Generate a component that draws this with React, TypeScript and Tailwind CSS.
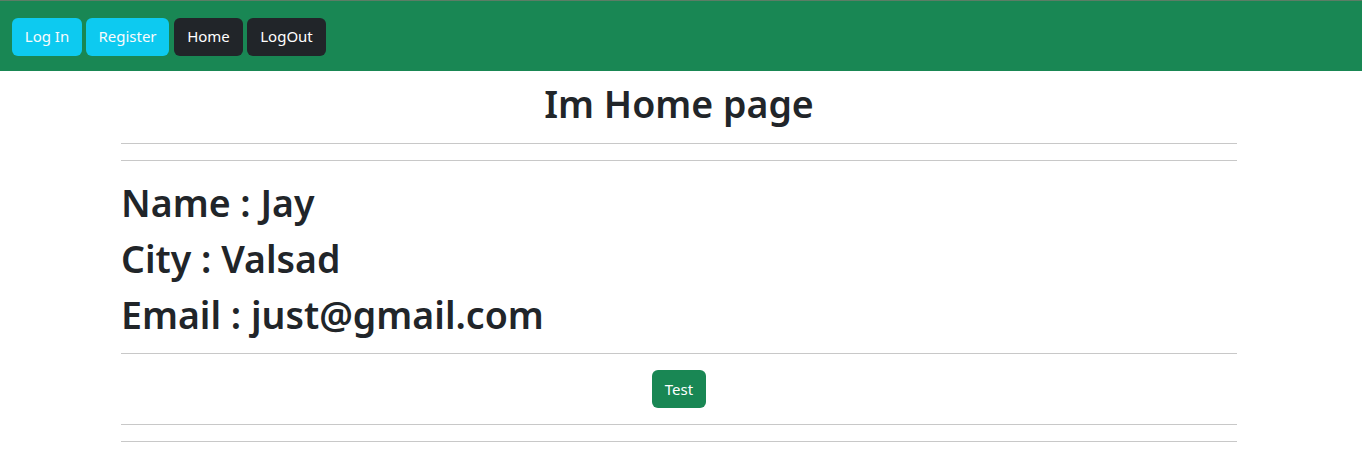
import React from 'react';

const font = { fontFamily: '"Noto Sans", "Open Sans", sans-serif' };

const NavButton = ({ label, tone, width }: { label: string; tone: 'info' | 'dark'; width: string }) => (
    <button
        type="button"
        className={
            (tone === 'info' ? 'bg-[#0dcaf0] text-[#f8fbfc] ' : 'bg-[#212529] text-white ') +
            width +
            ' h-[38px] rounded-[6px] text-[15px] leading-none flex items-center justify-center'
        }
    >
        {label}
    </button>
);

const Rule = () => <div className="h-px bg-[#c8c8c8]" />;

export default function App() {
    return (
        <div className="min-h-screen bg-white text-[#212529]" style={font}>
            {/* Top bar */}
            <nav className="h-[71px] bg-[#198754] border-t border-[#5c7d66] flex items-center pl-[12px]">
                <div className="flex items-center gap-[4px] mt-[1px]">
                    <NavButton label="Log In" tone="info" width="w-[70px]" />
                    <NavButton label="Register" tone="info" width="w-[83px] mr-[1px]" />
                    <NavButton label="Home" tone="dark" width="w-[69px]" />
                    <NavButton label="LogOut" tone="dark" width="w-[79px]" />
                </div>
            </nav>

            <main className="ml-[121px] w-[1116px]">
                <h1 className="mt-[9px] h-[48px] text-center text-[37.5px] leading-[48px] font-semibold">Im Home page</h1>
                <div className="mt-[15px]">
                    <Rule />
                </div>
                <div className="mt-[16px]">
                    <Rule />
                </div>

                <div className="mt-[18px] flex flex-col gap-[8px]">
                    <h1 className="h-[48px] text-[37.5px] leading-[48px] font-semibold">Name : Jay</h1>
                    <h1 className="h-[48px] text-[37.5px] leading-[48px] font-semibold">City : Valsad</h1>
                    <h1 className="h-[48px] text-[37.5px] leading-[48px] font-semibold">Email : just@gmail.com</h1>
                </div>

                <div className="mt-[14px]">
                    <Rule />
                </div>
                <div className="mt-[16px] flex justify-center">
                    <button
                        type="button"
                        className="w-[54px] h-[38px] rounded-[6px] bg-[#198754] text-white text-[15px] leading-none"
                    >
                        Test
                    </button>
                </div>
                <div className="mt-[16px]">
                    <Rule />
                </div>
                <div className="mt-[16px]">
                    <Rule />
                </div>
            </main>
        </div>
    );
}
